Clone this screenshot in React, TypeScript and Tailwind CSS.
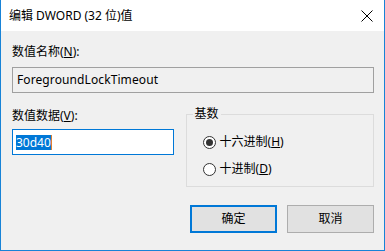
import React from "react";

const font = { fontFamily: '"Noto Sans", "Noto Sans CJK SC", sans-serif' };

const Radio = ({ checked, label, hotkey }: { checked?: boolean; label: string; hotkey: string }) => (
  <div className="flex items-center h-[16px]">
    <span className="w-[13px] h-[13px] rounded-full border border-[#333] bg-white flex items-center justify-center">
      {checked && <span className="w-[7px] h-[7px] rounded-full bg-[#333]" />}
    </span>
    <span className="ml-[4px] text-[12px] leading-[16px] text-black">
      {label}(<span className="underline">{hotkey}</span>)
    </span>
  </div>
);

export default function App() {
  return (
    <div
      className="w-[385px] h-[251px] flex flex-col border-x border-b border-[#1883d7] bg-[#f0f0f0] text-black overflow-hidden"
      style={font}
    >
      {/* Title bar */}
      <div className="h-[31px] bg-white flex items-center justify-between pl-[8px] pr-[10px] shrink-0">
        <span className="text-[12px] leading-[16px]">编辑 DWORD (32 位)值</span>
        <svg width="12" height="12" viewBox="0 0 12 12" className="mr-[1px]">
          <path d="M0.5 0.5 L11.5 11.5 M11.5 0.5 L0.5 11.5" stroke="#000" strokeWidth="1" />
        </svg>
      </div>

      {/* Body */}
      <div className="flex flex-col pl-[11px] pr-[10px]">
        <div className="mt-[13px] text-[12px] leading-[16px]">
          数值名称(<span className="underline">N</span>):
        </div>
        <div className="mt-[7px] h-[26px] w-[362px] border border-[#a0a0a0] bg-[#f0f0f0] flex items-center px-[4px] text-[12px] tracking-[0.1px]">
          ForegroundLockTimeout
        </div>

        <div className="flex mt-[15px]">
          <div className="flex flex-col w-[162px]">
            <div className="text-[12px] leading-[16px]">
              数值数据(<span className="underline">V</span>):
            </div>
            <div className="mt-[5px] h-[26px] border border-[#0078d7] bg-white flex items-center px-[3px] text-[12px]">
              <span className="bg-[#0078d7] text-white leading-[15px]">30d40</span>
              <span className="w-[1px] h-[15px] bg-[#e08030]" />
            </div>
          </div>

          <div className="ml-[12px] mt-[6px] w-[189px] h-[73px] border border-[#dcdcdc] relative flex flex-col pl-[16px] pt-[19px] gap-[11px]">
            <span className="absolute -top-[9px] left-[6px] px-[2px] bg-[#f0f0f0] text-[12px] leading-[16px]">基数</span>
            <Radio checked label="十六进制" hotkey="H" />
            <Radio label="十进制" hotkey="D" />
          </div>
        </div>

        <div className="flex justify-end gap-[10px] mt-[18px]">
          <button className="w-[87px] h-[28px] border-2 border-[#0078d7] bg-[#e1e1e1] text-[12px]">确定</button>
          <button className="w-[87px] h-[28px] border border-[#adadad] bg-[#e1e1e1] text-[12px]">取消</button>
        </div>
      </div>
    </div>
  );
}
